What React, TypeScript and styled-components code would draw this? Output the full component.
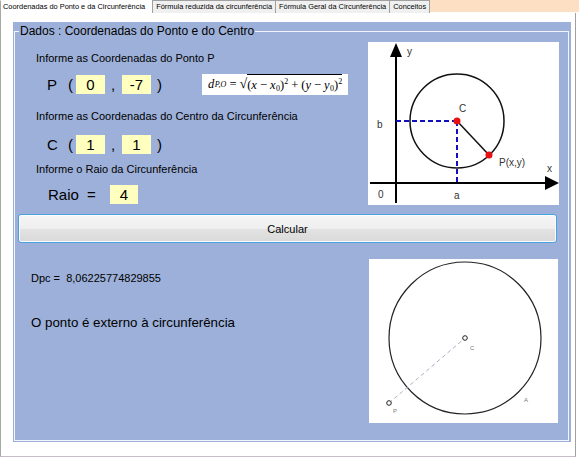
import React from 'react';
import styled, { createGlobalStyle } from 'styled-components';

const GlobalStyle = createGlobalStyle`
  html, body { margin: 0; padding: 0; background: #ffffff; }
  body { font-family: "Liberation Sans", Arial, sans-serif; color: #000; }
  * { box-sizing: border-box; }
`;

const Window = styled.div`
  width: 579px;
  height: 458px;
  background: #ffffff;
  display: flex;
  flex-direction: column;
  overflow: hidden;
`;

const TabStrip = styled.div`
  height: 13px;
  display: flex;
  align-items: flex-start;
  flex-shrink: 0;
`;

const Tab = styled.div<{ $active?: boolean }>`
  height: 13px;
  font-size: 7.4px;
  line-height: 12px;
  white-space: nowrap;
  background: ${(p) => (p.$active ? '#ffffff' : '#f0f0f0')};
  border: 1px solid ${(p) => (p.$active ? '#a3aba3' : '#a0a0a0')};
  border-bottom: none;
  border-top-color: ${(p) => (p.$active ? '#ffffff' : '#a0a0a0')};
  border-right-color: ${(p) => (p.$active ? '#ffffff' : '#a0a0a0')};
  padding: ${(p) => (p.$active ? '0 6px 0 2px' : '0 3px')};
  margin-left: ${(p) => (p.$active ? '0' : '-1px')};
  &:nth-child(2) { margin-left: 0; }
`;

const StripFill = styled.div`
  flex: 1;
  height: 12px;
  background: #fddfc3;
`;

const TabPage = styled.div`
  width: 576px;
  height: 444px;
  border-left: 1px solid #a3aba3;
  border-right: 1px solid #a0a0a0;
  border-bottom: 1px solid #c8bcc8;
  padding: 9px 4px 14px 12px;
  background: #ffffff;
`;

const BluePanel = styled.div`
  width: 558px;
  height: 420px;
  background: #9db0d9;
  padding: 9px 2px 1px 1px;
`;

const Frame = styled.div`
  position: relative;
  width: 100%;
  height: 100%;
  border: 1px solid #f2f5fb;
  display: flex;
  flex-direction: column;
`;

const Legend = styled.span`
  position: absolute;
  top: -8px;
  left: 4px;
  padding: 0 1px;
  background: #9db0d9;
  font-size: 12px;
  line-height: 14px;
  white-space: nowrap;
`;

const Section = styled.div<{ $top: number; $h: number }>`
  display: flex;
  margin-top: ${(p) => p.$top}px;
  height: ${(p) => p.$h}px;
  flex-shrink: 0;
`;

const Column = styled.div<{ $w: number; $pl: number }>`
  width: ${(p) => p.$w}px;
  padding-left: ${(p) => p.$pl}px;
  display: flex;
  flex-direction: column;
  flex-shrink: 0;
`;

const Label = styled.div<{ $top: number }>`
  margin-top: ${(p) => p.$top}px;
  font-size: 11px;
  line-height: 13px;
  height: 13px;
  white-space: nowrap;
`;

const Row = styled.div<{ $top: number; $pl: number }>`
  margin-top: ${(p) => p.$top}px;
  padding-left: ${(p) => p.$pl}px;
  height: 20px;
  display: flex;
  align-items: center;
`;

const Glyph = styled.span<{ $w: number; $pl?: number }>`
  width: ${(p) => p.$w}px;
  padding-left: ${(p) => p.$pl || 0}px;
  font-size: 15px;
  line-height: 19px;
  flex-shrink: 0;
  white-space: nowrap;
`;

const ValueBox = styled.div<{ $w: number }>`
  width: ${(p) => p.$w}px;
  height: 19px;
  background: #ffffc0;
  font-size: 15px;
  line-height: 19px;
  text-align: center;
  flex-shrink: 0;
`;

const FormulaBox = styled.div`
  width: 146px;
  height: 21px;
  background: #ffffff;
  display: flex;
  align-items: center;
  padding-left: 6px;
  font-family: "Liberation Serif", "Times New Roman", serif;
  font-size: 12.5px;
  white-space: nowrap;
  flex-shrink: 0;
`;

const Var = styled.span`
  font-style: italic;
`;

const Sub = styled.span<{ $italic?: boolean }>`
  font-size: 8px;
  vertical-align: -2px;
  padding-left: 0.5px;
  font-style: ${(p) => (p.$italic ? 'italic' : 'normal')};
`;

const Sup = styled.span`
  font-size: 8px;
  vertical-align: 5px;
`;

const Op = styled.span`
  padding: 0 3px;
`;

const RootSign = styled.span`
  font-size: 14px;
  line-height: 14px;
`;

const Radical = styled.span`
  border-top: 1px solid #000;
  line-height: 13px;
`;

const Picture = styled.div<{ $w: number; $h: number }>`
  width: ${(p) => p.$w}px;
  height: ${(p) => p.$h}px;
  background: #ffffff;
  flex-shrink: 0;
  svg { display: block; }
`;

const Button = styled.button`
  margin: 9px 11px 0 3px;
  height: 29px;
  flex-shrink: 0;
  border: 1px solid #4aa3df;
  border-radius: 3px;
  background: linear-gradient(#f6f6f6 0%, #eeeeee 50%, #e3e3e3 51%, #d9d9d9 100%);
  box-shadow: inset 0 0 0 1px #fcfcfc;
  font-family: "Liberation Sans", Arial, sans-serif;
  font-size: 11px;
  color: #000;
  padding: 0;
`;

const ResultLine = styled.div<{ $top: number; $size: number }>`
  margin-top: ${(p) => p.$top}px;
  font-size: ${(p) => p.$size}px;
  line-height: ${(p) => Math.round(p.$size * 1.2)}px;
  white-space: pre;
`;

const AxisDiagram = () => (
  <svg width="191" height="163" viewBox="0 0 191 163">
    <g fontFamily="Liberation Sans, Arial, sans-serif" fontSize="10" fill="#333">
      <line x1="28" y1="12" x2="28" y2="161" stroke="#000" strokeWidth="2" />
      <polygon points="28,1 22,15 34,15" fill="#000" />
      <line x1="2" y1="141" x2="180" y2="141" stroke="#000" strokeWidth="2" />
      <polygon points="191,141 177,134 177,148" fill="#000" />
      <circle cx="89" cy="79" r="47" fill="none" stroke="#111" strokeWidth="1.5" />
      <line x1="28" y1="79" x2="89" y2="79" stroke="#1010c0" strokeWidth="2" strokeDasharray="5 3" />
      <line x1="89" y1="79" x2="89" y2="141" stroke="#1010c0" strokeWidth="2" strokeDasharray="5 3" />
      <line x1="89" y1="79" x2="121" y2="113" stroke="#111" strokeWidth="1.5" />
      <circle cx="89" cy="79" r="3.5" fill="#e81010" />
      <circle cx="121" cy="113" r="3.5" fill="#e81010" />
      <text x="39" y="13">y</text>
      <text x="179" y="130">x</text>
      <text x="91" y="70">C</text>
      <text x="9" y="86">b</text>
      <text x="10" y="156">0</text>
      <text x="86" y="157">a</text>
      <text x="131" y="124">P(x,y)</text>
    </g>
  </svg>
);

const ResultDiagram = () => (
  <svg width="189" height="164" viewBox="0 0 189 164">
    <g fontFamily="Liberation Sans, Arial, sans-serif" fontSize="6" fill="#777">
      <circle cx="96" cy="79" r="76" fill="none" stroke="#222" strokeWidth="1.2" />
      <line x1="20" y1="144" x2="96" y2="79" stroke="#b4acc8" strokeWidth="1" strokeDasharray="4 3" />
      <circle cx="96" cy="79" r="2.3" fill="#fff" stroke="#222" strokeWidth="1" />
      <circle cx="20" cy="144" r="2.3" fill="#fff" stroke="#222" strokeWidth="1" />
      <text x="101" y="91">C</text>
      <text x="24" y="154">P</text>
      <text x="155" y="143">A</text>
    </g>
  </svg>
);

export default function App() {
  return (
    <>
      <GlobalStyle />
      <Window>
        <TabStrip>
          <Tab $active>Coordenadas do Ponto e da Circunferência</Tab>
          <Tab>Fórmula reduzida da circunferência</Tab>
          <Tab>Fórmula Geral da Circunferência</Tab>
          <Tab>Conceitos</Tab>
          <StripFill />
        </TabStrip>
        <TabPage>
          <BluePanel>
            <Frame>
              <Legend>Dados : Coordenadas do Ponto e do Centro</Legend>
              <Section $top={10} $h={163}>
                <Column $w={353} $pl={21}>
                  <Label $top={10}>Informe as Coordenadas do Ponto P</Label>
                  <Row $top={9} $pl={11}>
                    <Glyph $w={21}>P</Glyph>
                    <Glyph $w={8}>(</Glyph>
                    <ValueBox $w={29}>0</ValueBox>
                    <Glyph $w={17} $pl={6}>,</Glyph>
                    <ValueBox $w={29}>-7</ValueBox>
                    <Glyph $w={51} $pl={6}>)</Glyph>
                    <FormulaBox>
                      <Var>d</Var>
                      <Sub $italic>P,O</Sub>
                      <Op>=</Op>
                      <RootSign>√</RootSign>
                      <Radical>
                        (<Var>x</Var>
                        <Op>−</Op>
                        <Var>x</Var>
                        <Sub>0</Sub>)<Sup>2</Sup>
                        <Op>+</Op>(<Var>y</Var>
                        <Op>−</Op>
                        <Var>y</Var>
                        <Sub>0</Sub>)<Sup>2</Sup>
                      </Radical>
                    </FormulaBox>
                  </Row>
                  <Label $top={16}>Informe as Coordenadas do Centro da Circunferência</Label>
                  <Row $top={11} $pl={11}>
                    <Glyph $w={21}>C</Glyph>
                    <Glyph $w={8}>(</Glyph>
                    <ValueBox $w={29}>1</ValueBox>
                    <Glyph $w={17} $pl={6}>,</Glyph>
                    <ValueBox $w={29}>1</ValueBox>
                    <Glyph $w={51} $pl={6}>)</Glyph>
                  </Row>
                  <Label $top={9}>Informe o Raio da Circunferência</Label>
                  <Row $top={8} $pl={12}>
                    <Glyph $w={39}>Raio</Glyph>
                    <Glyph $w={23}>=</Glyph>
                    <ValueBox $w={28}>4</ValueBox>
                  </Row>
                </Column>
                <Picture $w={191} $h={163}>
                  <AxisDiagram />
                </Picture>
              </Section>
              <Button type="button">Calcular</Button>
              <Section $top={16} $h={164}>
                <Column $w={354} $pl={16}>
                  <ResultLine $top={13} $size={11}>{'Dpc =  8,06225774829855'}</ResultLine>
                  <ResultLine $top={30} $size={13.3}>O ponto é externo à circunferência</ResultLine>
                </Column>
                <Picture $w={189} $h={164}>
                  <ResultDiagram />
                </Picture>
              </Section>
            </Frame>
          </BluePanel>
        </TabPage>
      </Window>
    </>
  );
}
